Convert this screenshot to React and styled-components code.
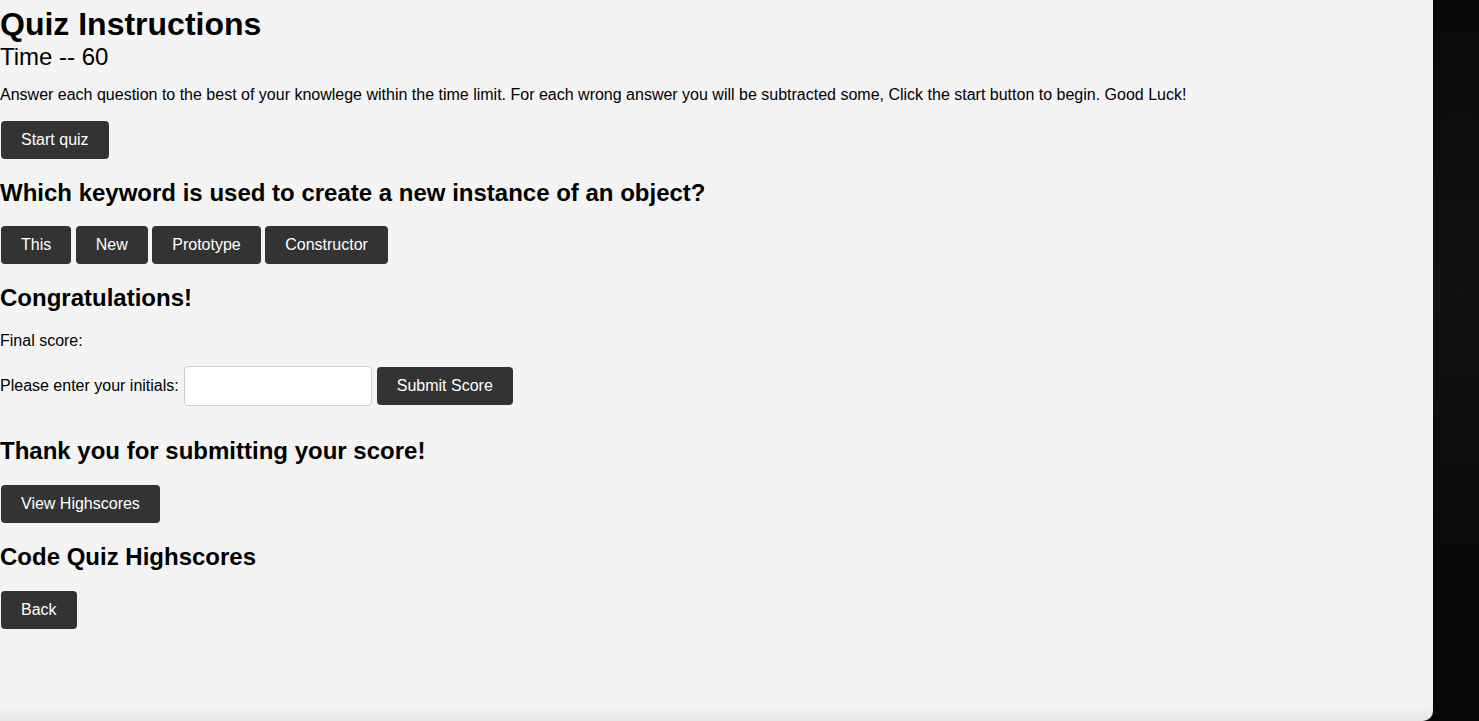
import React from "react";
import styled, { createGlobalStyle } from "styled-components";

const Global = createGlobalStyle`
  html, body { margin: 0; padding: 0; height: 100%; overflow: hidden; }
  body { background: #0a0a0c; font-family: "Liberation Sans", Arial, Helvetica, sans-serif; }
  #root { height: 100%; }
`;

const Screen = styled.div`
  display: flex;
  height: 100vh;
  background: #0a0a0c;
`;

const Panel = styled.main`
  width: 1433px;
  flex: none;
  box-sizing: border-box;
  padding: 6px 0 0 1px;
  background: #f4f4f4;
  color: #000;
  border-bottom-right-radius: 10px;
  box-shadow: inset 0 -14px 16px -12px rgba(0, 0, 0, 0.09);
  overflow: hidden;
`;

const Backdrop = styled.div`
  flex: 1;
  background: radial-gradient(circle at 60% 40%, #111114 0%, #08080a 70%);
`;

const Title = styled.h1`
  margin: 0 0 0 -1px;
  font-size: 32px;
  font-weight: 700;
  line-height: 1.15;
`;

const Timer = styled.div`
  font-size: 24px;
  line-height: 1.15;
  margin-left: -1px;
`;

const Text = styled.p`
  margin: 16px 0 16px -1px;
  font-size: 16px;
  line-height: 1.15;
`;

const Heading = styled.h2`
  margin: 20px 0 20px -1px;
  font-size: 24px;
  font-weight: 700;
  line-height: 1.15;
`;

const Button = styled.button`
  display: block;
  box-sizing: border-box;
  height: 38px;
  padding: 0 20px;
  border: none;
  border-radius: 4px;
  background: #333;
  color: #fff;
  font-family: "Liberation Sans", Arial, Helvetica, sans-serif;
  font-size: 16px;
  cursor: pointer;
`;

const ButtonRow = styled.div`
  display: flex;
  gap: 4.5px;
`;

const FormRow = styled.div`
  display: flex;
  align-items: center;
  gap: 4.5px;
  margin: 16px 0 31px -1px;
  font-size: 16px;
`;

const Label = styled.label`
  font-size: 16px;
`;

const Input = styled.input`
  box-sizing: border-box;
  width: 188px;
  height: 40px;
  margin-left: 1px;
  padding: 0 10px;
  border: 1px solid #cfcfcf;
  border-radius: 4px;
  background: #fff;
  font-family: "Liberation Sans", Arial, Helvetica, sans-serif;
  font-size: 16px;
  outline: none;
`;

const Spacer = styled.div`
  height: ${(p) => p.h}px;
`;

const answers = ["This", "New", "Prototype", "Constructor"];

export default function App() {
  return (
    <>
      <Global />
      <Screen>
        <Panel>
          <Title>Quiz Instructions</Title>
          <Timer>Time -- 60</Timer>
          <Text>
            Answer each question to the best of your knowlege within the time limit. For each wrong answer you will be subtracted some, Click the start button to begin. Good Luck!
          </Text>
          <Button>Start quiz</Button>
          <Heading>Which keyword is used to create a new instance of an object?</Heading>
          <ButtonRow>
            {answers.map((a) => (
              <Button key={a}>{a}</Button>
            ))}
          </ButtonRow>
          <Heading>Congratulations!</Heading>
          <Text>Final score:</Text>
          <FormRow>
            <Label htmlFor="initials">Please enter your initials:</Label>
            <Input id="initials" type="text" />
            <Button>Submit Score</Button>
          </FormRow>
          <Heading>Thank you for submitting your score!</Heading>
          <Button>View Highscores</Button>
          <Heading>Code Quiz Highscores</Heading>
          <Button>Back</Button>
          <Spacer h={80} />
        </Panel>
        <Backdrop />
      </Screen>
    </>
  );
}
